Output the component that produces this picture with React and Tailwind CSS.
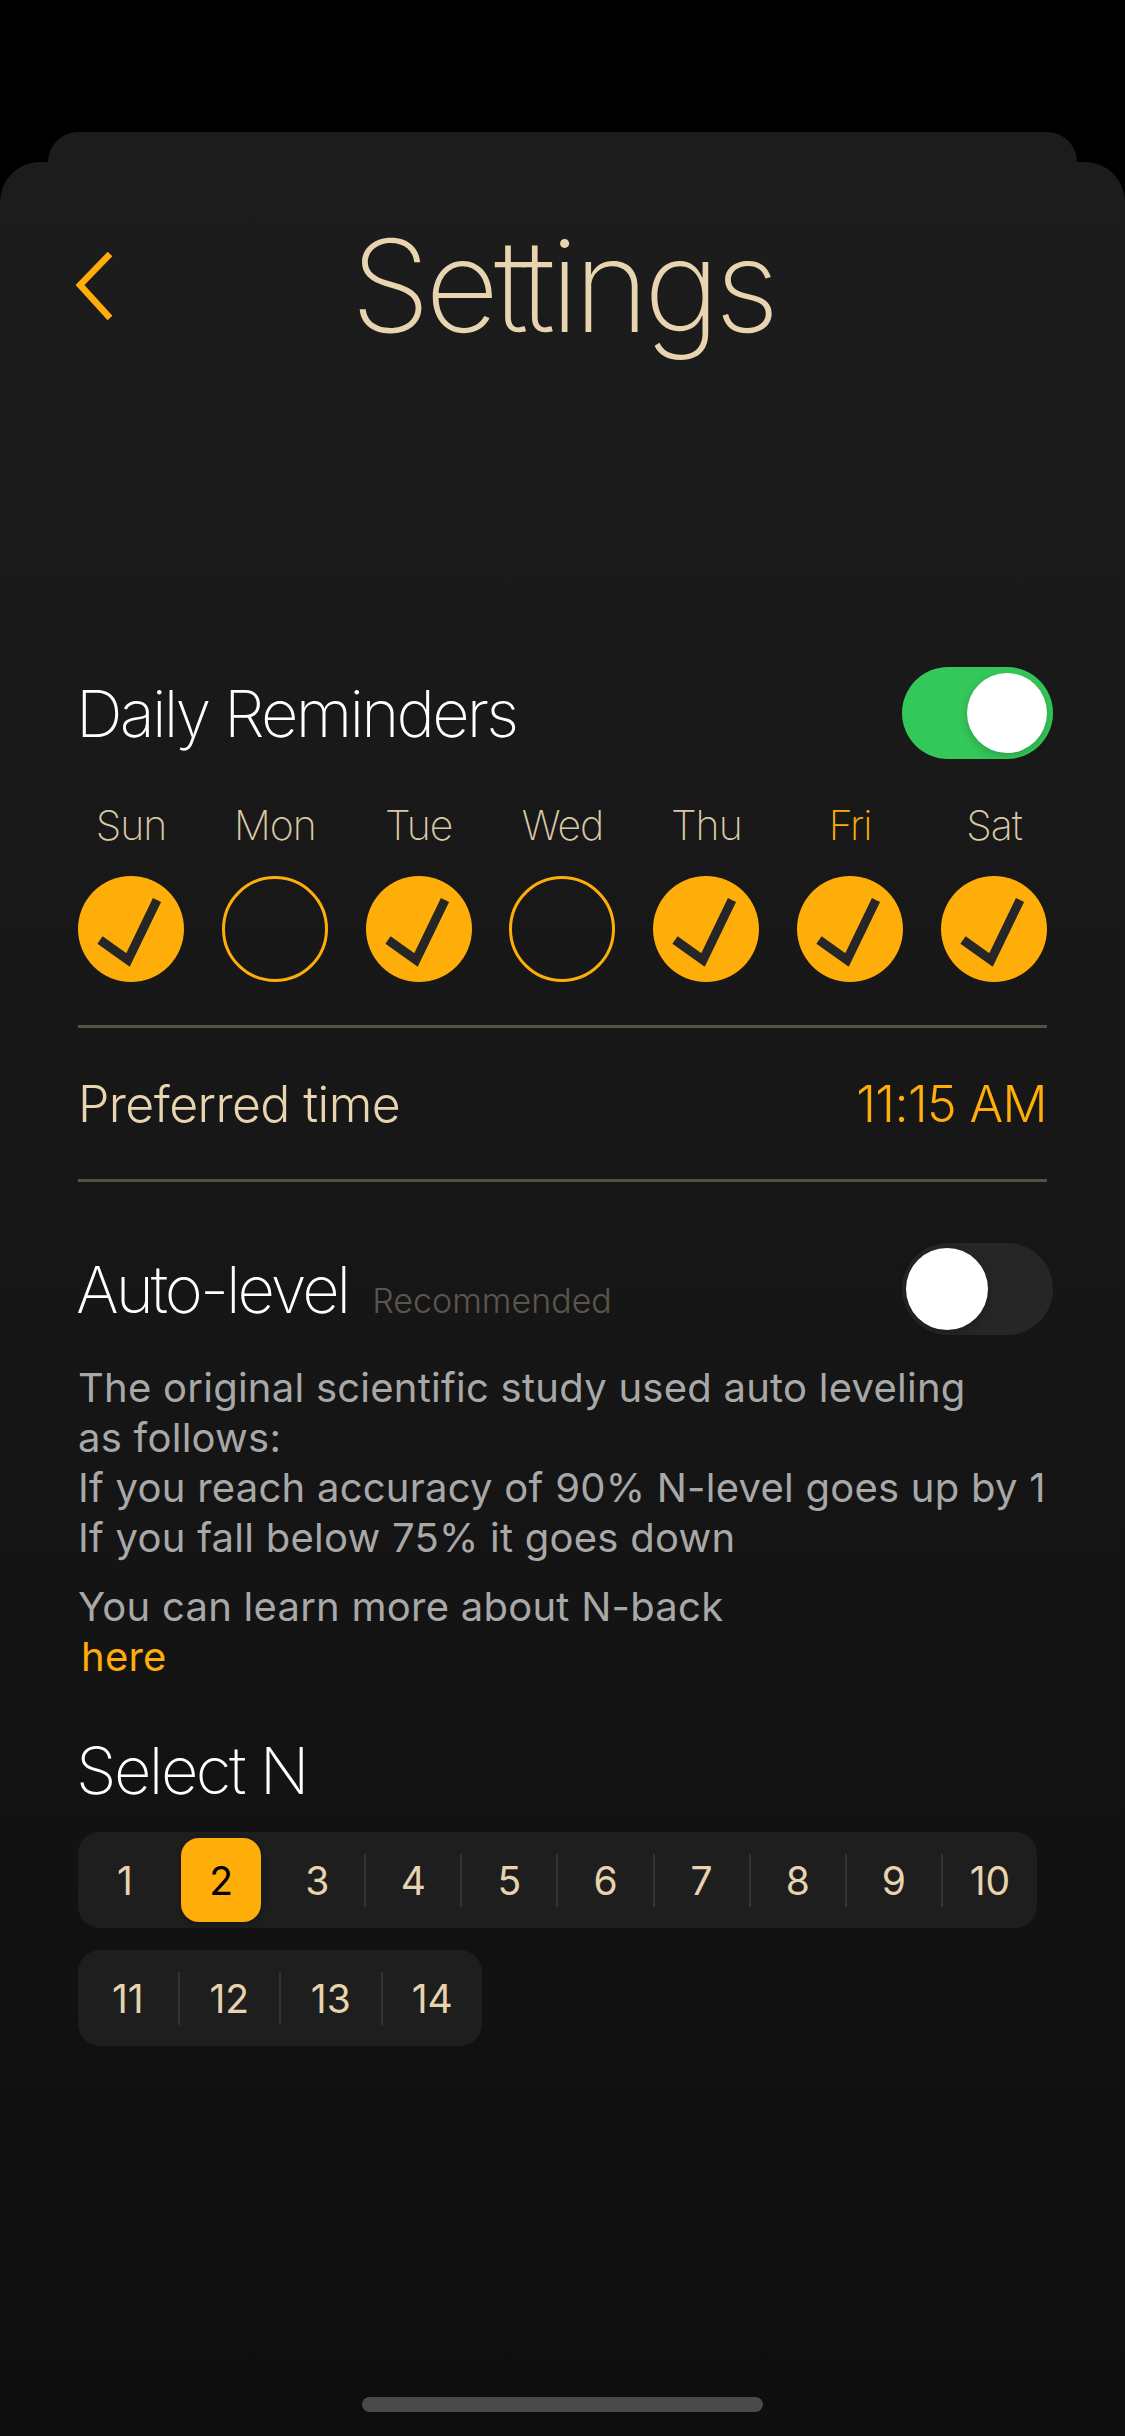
import React, { useState } from "react";

const days = [
  { label: "Sun", on: true },
  { label: "Mon", on: false },
  { label: "Tue", on: true },
  { label: "Wed", on: false },
  { label: "Thu", on: true },
  { label: "Fri", on: true, today: true },
  { label: "Sat", on: true },
];

const Toggle = ({ on }) => (
  <div
    className={
      on
        ? "-mr-[6px] w-[151px] h-[92px] rounded-full bg-[#34c759] flex items-center justify-end pr-[6px]"
        : "-mr-[6px] w-[151px] h-[92px] rounded-full bg-[#262626] flex items-center justify-start pl-[4px]"
    }
  >
    <div
      className={
        on
          ? "w-[80px] h-[80px] rounded-full bg-white shadow-[0_3px_8px_rgba(0,0,0,0.2)]"
          : "w-[82px] h-[82px] rounded-full bg-white shadow-[0_3px_8px_rgba(0,0,0,0.25)]"
      }
    />
  </div>
);

const DayCircle = ({ on }) =>
  on ? (
    <div className="w-[106px] h-[106px] rounded-full bg-[#ffad08]">
      <svg width="106" height="106" viewBox="0 0 106 106">
        <polyline
          points="22,64 50,84 79,24"
          fill="none"
          stroke="#262626"
          strokeWidth="9"
          strokeLinecap="butt"
          strokeLinejoin="miter"
        />
      </svg>
    </div>
  ) : (
    <div className="w-[106px] h-[106px] rounded-full border-[3px] border-[#ffad08]" />
  );

const Segments = ({ items, selected, onSelect, width }) => (
  <div className={`flex items-center h-[96px] rounded-[22px] bg-[#1e1e1e] ${width}`}>
    {items.map((n, i) => {
      const hideDivider = i === 0 || n === selected || items[i - 1] === selected;
      return (
        <React.Fragment key={n}>
          {i > 0 && (
            <div
              className={
                hideDivider
                  ? "w-[2px] h-[53px] bg-transparent"
                  : "w-[2px] h-[53px] bg-[#333333]"
              }
            />
          )}
          <div className="flex-1 h-full flex items-center justify-center" onClick={() => onSelect(n)}>
            {n === selected ? (
              <div className="w-[80px] h-[84px] rounded-[18px] bg-[#ffad08] flex items-center justify-center text-[39px] text-black leading-none shadow-[0_2px_6px_rgba(0,0,0,0.3)]">
                {n}
              </div>
            ) : (
              <span className="text-[39px] leading-none text-[#e6d4ae]">{n}</span>
            )}
          </div>
        </React.Fragment>
      );
    })}
  </div>
);

const App = () => {
  const [n, setN] = useState(2);

  return (
    <div className="min-h-screen bg-black pt-[132px] font-['Inter','Noto_Sans',sans-serif]">
      <div className="mx-[48px] h-[30px] rounded-t-[34px] bg-[#1c1c1c]" />
      <div className="h-[2274px] rounded-t-[40px] bg-gradient-to-b from-[#1c1c1c] via-[#161616] to-[#0e0e0e] flex flex-col px-[78px] pt-[60px]">
        {/* header */}
        <div className="grid grid-cols-[1fr_auto_1fr] items-center h-[128px]">
          <div className="-ml-[4px]">
            <svg width="44" height="72" viewBox="0 0 44 72">
              <polyline
                points="36,4 6,35 36,68"
                fill="none"
                stroke="#ffad08"
                strokeWidth="6.5"
                strokeLinecap="butt"
                strokeLinejoin="miter"
              />
            </svg>
          </div>
          <h1 className="text-[128px] leading-none font-extralight text-[#e8d5b0] tracking-[-5px]">Settings</h1>
          <div />
        </div>

        {/* daily reminders */}
        <div className="mt-[317px] flex items-center justify-between">
          <span className="-ml-[2px] text-[65px] leading-none font-extralight text-white tracking-[-2.8px]">Daily Reminders</span>
          <Toggle on />
        </div>

        <div className="mt-[46px] flex justify-between">
          {days.map((d) => (
            <div key={d.label} className="w-[106px] flex flex-col items-center">
              <span
                className={
                  d.today
                    ? "text-[41px] leading-none font-extralight tracking-[-1px] text-[#ffad08]"
                    : "text-[41px] leading-none font-extralight tracking-[-1px] text-[#d9c9a7]"
                }
              >
                {d.label}
              </span>
              <div className="mt-[30px]">
                <DayCircle on={d.on} />
              </div>
            </div>
          ))}
        </div>

        <div className="mt-[43px] h-[3px] bg-[#575044]" />
        <div className="h-[151px] flex items-center justify-between">
          <span className="text-[50px] leading-none font-light tracking-[-0.6px] text-[#e8d5b0]">Preferred time</span>
          <span className="text-[50px] leading-none font-light tracking-[-0.6px] text-[#ffad08]">11:15 AM</span>
        </div>
        <div className="h-[3px] bg-[#575044]" />

        {/* auto-level */}
        <div className="mt-[61px] flex items-center justify-between">
          <div className="flex items-baseline gap-[24px]">
            <span className="-ml-[2px] text-[65px] leading-none font-extralight text-white tracking-[-3px]">Auto-level</span>
            <span className="text-[34px] leading-none font-light text-[#5b564d]">Recommended</span>
          </div>
          <Toggle on={false} />
        </div>

        <div className="mt-[28px] text-[40px] leading-[50px] tracking-[0.25px] text-[#a8a8a8]">
          <p>The original scientific study used auto leveling</p>
          <p>as follows:</p>
          <p>If you reach accuracy of 90% N-level goes up by 1</p>
          <p>If you fall below 75% it goes down</p>
        </div>
        <div className="mt-[19px] text-[40px] leading-[50px] tracking-[0.25px]">
          <p className="text-[#a8a8a8]">You can learn more about N-back</p>
          <a className="block text-[#ffad08] ml-[3px]">here</a>
        </div>

        {/* select n */}
        <h2 className="mt-[56px] -ml-[2px] text-[65px] leading-none font-extralight text-white tracking-[-2.5px]">Select N</h2>
        <div className="mt-[29px] flex flex-col gap-[22px]">
          <Segments items={[1, 2, 3, 4, 5, 6, 7, 8, 9, 10]} selected={n} onSelect={setN} width="w-[959px]" />
          <Segments items={[11, 12, 13, 14]} selected={n} onSelect={setN} width="w-[404px]" />
        </div>

        <div className="mt-auto mb-[24px] self-center w-[401px] h-[15px] rounded-full bg-[#4a4a4a]" />
      </div>
    </div>
  );
};

export default App;
